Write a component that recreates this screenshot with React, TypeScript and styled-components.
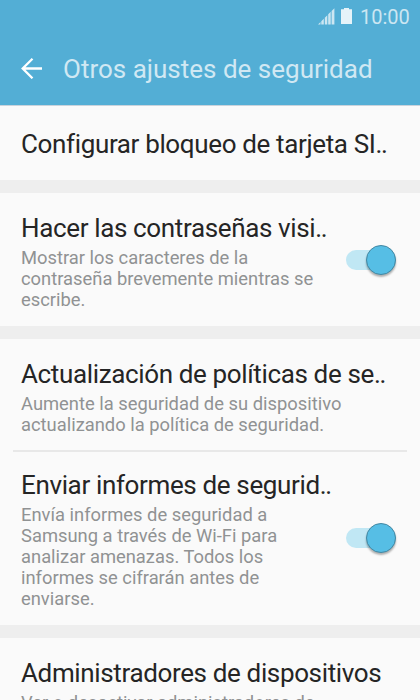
import React from "react";
import styled, { createGlobalStyle } from "styled-components";

const Global = createGlobalStyle`
  * { box-sizing: border-box; }
  body { margin: 0; background: #eee; font-family: Roboto, sans-serif; }
`;
const Screen = styled.main`
  width: 420px; height: 700px; overflow: hidden; background: #eeeeee;
  display: flex; flex-direction: column;
`;
const Header = styled.header`
  flex: none; height: 106px; background: #53aed5; display: flex; flex-direction: column;
  border-bottom: 1px solid #c9d3dc;
`;
const StatusBar = styled.div`
  height: 34px; display: flex; justify-content: flex-end; align-items: center;
  padding-right: 9px; color: #cce6f2; font-size: 20px; line-height: 34px;
`;
const Signal = styled.svg` width: 17px; height: 17px; margin: 0 6px 2px 0; `;
const Battery = styled.svg` width: 11px; height: 16px; margin: 0 8px 3px 0; color: #e6f3f9; `;
const Clock = styled.span` width: 51px; white-space: nowrap; `;
const TitleBar = styled.div`
  height: 70px; display: flex; align-items: center; padding-left: 21px;
`;
const Back = styled.svg` width: 22px; height: 22px; margin: 0 20px 2px 0; `;
const Title = styled.h1`
  margin: 0; font-size: 26px; font-weight: 400; color: #d0e8f3; white-space: nowrap; line-height: 32px;
`;
const Group = styled.section<{ $h: number }>`
  flex: none; height: ${p => p.$h}px; background: #fafafa; margin-bottom: 13px;
`;
const Row = styled.div<{ $h: number; $top: number; $line?: boolean }>`
  height: ${p => p.$h}px; margin: 0 13px; padding: ${p => p.$top}px 8px 0;
  display: flex; justify-content: space-between;
  border-bottom: ${p => (p.$line ? "2px solid #e8e8e8" : "0")};
`;
const Copy = styled.div` white-space: nowrap; `;
const Label = styled.h2`
  margin: 0; font-size: 26px; line-height: 32px; font-weight: 400; color: #252525;
  letter-spacing: -0.36px;
`;
const Dots = styled.span` letter-spacing: -1.4px; `;
const Note = styled.p`
  margin: 3px 0 0; font-size: 18.36px; line-height: 21px; color: #909293;
`;
const Line = styled.span` display: block; `;
const Switch = styled.div<{ $top: number }>`
  flex: none; width: 50px; height: 20px; margin-top: ${p => p.$top}px; margin-right: 3px;
  display: flex; align-items: center; justify-content: flex-end;
  background: #c0e7f4; border-radius: 10px;
`;
const Knob = styled.span`
  width: 30px; height: 30px; flex: none; border-radius: 50%; background: #56bee5;
  border: 1px solid #4388a3; box-shadow: 0 2px 2px rgba(0, 0, 0, 0.3);
`;

export default function App() {
  return (
    <>
      <Global />
      <Screen>
        <Header>
          <StatusBar>
            <Signal viewBox="0 0 17 17" fill="currentColor"><path d="M0 16.5 2.5 14v2.5zM3.3 13.3l2.5-2.5v5.7H3.3zM6.8 9.8l2.5-2.5v9.2H6.8zM10.2 6.3l2.5-2.5v12.7h-2.5zM13.6 2.9 16.4.3v16.2h-2.8z" /></Signal>
            <Battery viewBox="0 0 11 16" fill="currentColor"><path d="M3 0h5v1.3h3V16H0V1.3h3z" /></Battery>
            <Clock>10:00</Clock>
          </StatusBar>
          <TitleBar>
            <Back viewBox="0 0 22 22" fill="none" stroke="#fff" strokeWidth="2.3"><path d="M21 11.5H2M11.5 1.7 1.7 11.5l9.8 9.8" /></Back>
            <Title>Otros ajustes de seguridad</Title>
          </TitleBar>
        </Header>
        <Group $h={74}><Row $h={74} $top={22}><Copy><Label>Configurar bloqueo de tarjeta SI<Dots>..</Dots></Label></Copy></Row></Group>
        <Group $h={133}>
          <Row $h={133} $top={19}>
            <Copy><Label>Hacer las contraseñas visi<Dots>..</Dots></Label>
              <Note><Line>Mostrar los caracteres de la</Line><Line>contraseña brevemente mientras se</Line><Line>escribe.</Line></Note></Copy>
            <Switch $top={38}><Knob /></Switch>
          </Row>
        </Group>
        <Group $h={286}>
          <Row $h={113} $top={19} $line>
            <Copy><Label>Actualización de políticas de se<Dots>..</Dots></Label>
              <Note><Line>Aumente la seguridad de su dispositivo</Line><Line>actualizando la política de seguridad.</Line></Note></Copy>
          </Row>
          <Row $h={173} $top={17}>
            <Copy><Label>Enviar informes de segurid<Dots>..</Dots></Label>
              <Note><Line>Envía informes de seguridad a</Line><Line>Samsung a través de Wi-Fi para</Line><Line>analizar amenazas. Todos los</Line><Line>informes se cifrarán antes de</Line><Line>enviarse.</Line></Note></Copy>
            <Switch $top={59}><Knob /></Switch>
          </Row>
        </Group>
        <Group $h={110}>
          <Row $h={110} $top={19}>
            <Copy><Label>Administradores de dispositivos</Label><Note><Line>Ver o desactivar administradores de</Line></Note></Copy>
          </Row>
        </Group>
      </Screen>
    </>
  );
}
